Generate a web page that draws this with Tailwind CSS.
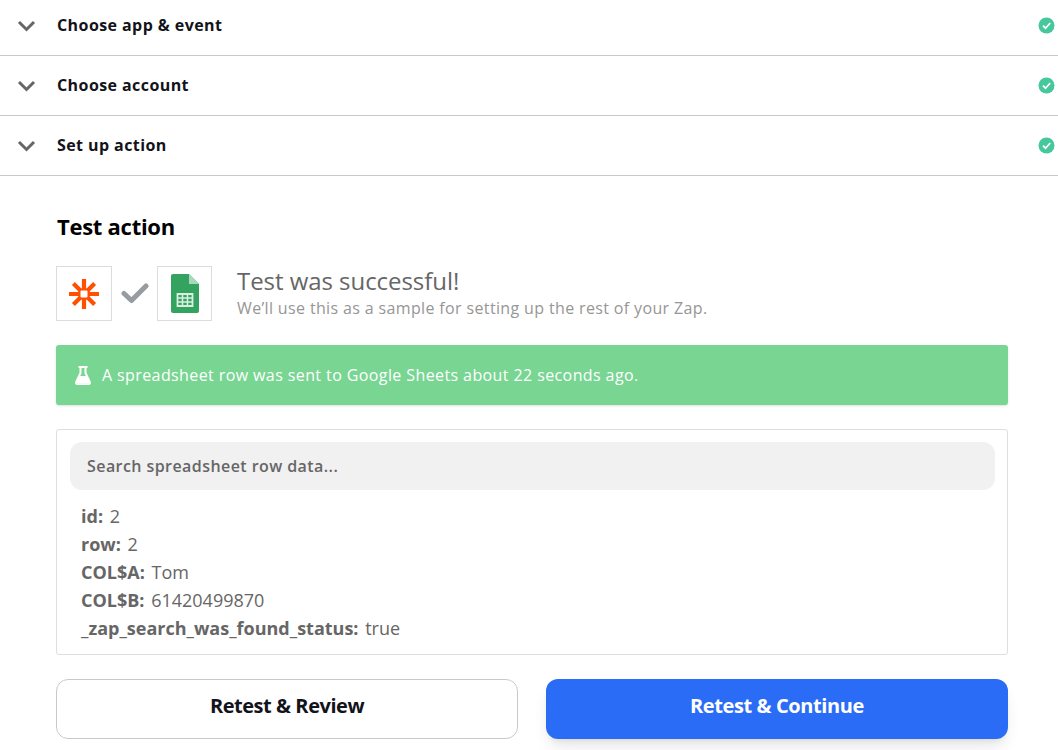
<!DOCTYPE html>
<html lang="en">
<head>
    <meta charset="UTF-8">
    <title>Test action</title>
    <script src="https://cdn.jsdelivr.net/npm/@tailwindcss/browser@4"></script>
</head>
<body class="bg-white w-[1058px] h-[750px] overflow-hidden font-['Open_Sans',sans-serif]">

    <div class="flex items-center h-[56px] border-b border-[#c9c9c9] pl-[17px] pr-[3px]">
        <svg class="w-[19px] h-[12px] mt-[-4px]" viewBox="0 0 19 12"><path d="M2 2l7.500 7.500L17 2" fill="none" stroke="#666" stroke-width="3"/></svg>
        <span class="ml-[21px] text-[16px] leading-[22px] font-bold text-[#13131a] tracking-[0.42px] mt-[-6px]">Choose app &amp; event</span>
        <svg class="ml-auto w-[17px] h-[17px] mt-[-4px]" viewBox="0 0 17 17"><circle cx="8.500" cy="8.500" r="8" fill="#46c79c"/><path d="M5 8.700l2.500 2.500L12.200 6" fill="none" stroke="#fff" stroke-width="1.700"/></svg>
    </div>
    <div class="flex items-center h-[60px] border-b border-[#c9c9c9] pl-[17px] pr-[3px]">
        <svg class="w-[19px] h-[12px]" viewBox="0 0 19 12"><path d="M2 2l7.500 7.500L17 2" fill="none" stroke="#666" stroke-width="3"/></svg>
        <span class="ml-[21px] text-[16px] leading-[22px] font-bold text-[#13131a] tracking-[0.42px] mt-[-2px]">Choose account</span>
        <svg class="ml-auto w-[17px] h-[17px]" viewBox="0 0 17 17"><circle cx="8.500" cy="8.500" r="8" fill="#46c79c"/><path d="M5 8.700l2.500 2.500L12.200 6" fill="none" stroke="#fff" stroke-width="1.700"/></svg>
    </div>
    <div class="flex items-center h-[60px] border-b border-[#c9c9c9] pl-[17px] pr-[3px]">
        <svg class="w-[19px] h-[12px]" viewBox="0 0 19 12"><path d="M2 2l7.500 7.500L17 2" fill="none" stroke="#666" stroke-width="3"/></svg>
        <span class="ml-[21px] text-[16px] leading-[22px] font-bold text-[#13131a] tracking-[0.42px] mt-[-2px]">Set up action</span>
        <svg class="ml-auto w-[17px] h-[17px]" viewBox="0 0 17 17"><circle cx="8.500" cy="8.500" r="8" fill="#46c79c"/><path d="M5 8.700l2.500 2.500L12.200 6" fill="none" stroke="#fff" stroke-width="1.700"/></svg>
    </div>

    <div class="pl-[56px] pr-[50px] pt-[34px]">
        <h2 class="text-[22px] leading-[32px] font-bold text-black pl-[1px] tracking-[-0.27px]">Test action</h2>

        <div class="flex items-center mt-[24px] h-[55px]">
            <div class="w-[56px] h-[55px] border border-[#dcdcdc] flex items-center justify-center">
                <svg class="w-[32px] h-[32px]" viewBox="0 0 32 32">
                    <g stroke="#ff4f00" stroke-width="4.200">
                        <path d="M16 1v10M16 21v10M1 16h10M21 16h10M5.400 5.400l7 7M19.600 19.600l7 7M26.600 5.400l-7 7M12.400 19.600l-7 7"/>
                    </g>
                    <rect x="10.500" y="10.500" width="11" height="11" fill="#ff4f00"/>
                    <rect x="12.500" y="12.500" width="7" height="7" rx="1" fill="#fff"/>
                </svg>
            </div>
            <svg class="w-[28px] h-[22px] ml-[9px] mt-[-2px]" viewBox="0 0 28 22"><path d="M3 11.500l7.500 7L25 4" fill="none" stroke="#969ca1" stroke-width="5" stroke-linecap="round" stroke-linejoin="round"/></svg>
            <div class="w-[55px] h-[55px] ml-[8px] border border-[#dcdcdc] flex items-center justify-center">
                <svg class="w-[28px] h-[39px] mt-[-1px]" viewBox="0 0 28 39">
                    <path d="M2 0h16l10 10v27a2 2 0 0 1-2 2H2a2 2 0 0 1-2-2V2a2 2 0 0 1 2-2z" fill="#34a35f"/>
                    <path d="M18 0l10 10H18z" fill="#a9d8bd"/>
                    <path d="M6.500 20h15v12h-15z" fill="none" stroke="#d8efe1" stroke-width="1.800"/>
                    <path d="M6.500 24h15M6.500 28h15M11.500 20v12M16.500 20v12" stroke="#d8efe1" stroke-width="1.600"/>
                </svg>
            </div>
            <div class="ml-[25px] mt-[-1px]">
                <p class="text-[24px] leading-[30px] text-[#666666] tracking-[-0.05px]">Test was successful!</p>
                <p class="mt-[1px] text-[16px] leading-[23px] text-[#969696] tracking-[0.36px]">We’ll use this as a sample for setting up the rest of your Zap.</p>
            </div>
        </div>

        <div class="flex items-center h-[60px] mt-[24px] bg-[#78d592] rounded-[3px] pl-[19px] text-white text-[16px] shadow-sm">
            <svg class="w-[16px] h-[19px]" viewBox="0 0 16 19"><path d="M3.500 1h9M5.500 1v6L1.200 16a1.500 1.500 0 0 0 1.400 2.200h10.800a1.500 1.500 0 0 0 1.400-2.200L10.500 7V1" fill="none" stroke="#fff" stroke-width="2"/><path d="M4.300 10h7.400l3.400 7.500H.900z" fill="#fff"/></svg>
            <span class="ml-[11px] tracking-[0.4px]">A spreadsheet row was sent to Google Sheets about 22 seconds ago.</span>
        </div>

        <div class="mt-[24px] h-[226px] border border-[#dedede] rounded-[3px] pt-[12px] pl-[13px] pr-[12px]">
            <div class="h-[48px] bg-[#f1f1f1] rounded-[12px] flex items-center pl-[17px] text-[16px] font-semibold text-[#666666] tracking-[0.43px]">Search spreadsheet row data...</div>
            <div class="mt-[12px] pl-[11px] text-[18px] leading-[28px] text-[#666666]">
                <p><b class="font-bold mr-[2px]">id:</b> 2</p>
                <p><b class="font-bold mr-[2px]">row:</b> 2</p>
                <p><b class="font-bold mr-[2px]">COL$A:</b> Tom</p>
                <p><b class="font-bold mr-[2px]">COL$B:</b> 61420499870</p>
                <p><b class="font-bold mr-[2px]">_zap_search_was_found_status:</b> true</p>
            </div>
        </div>

        <div class="flex gap-[28px] mt-[24px]">
            <button class="w-[462px] h-[60px] pb-[6px] border border-[#c9c9c9] rounded-[12px] bg-white text-[20px] font-bold tracking-[-0.45px] text-[#13131a]">Retest &amp; Review</button>
            <button class="w-[462px] h-[60px] pb-[6px] rounded-[12px] bg-[#2b6cf6] text-[20px] font-bold tracking-[-0.4px] text-white shadow-lg">Retest &amp; Continue</button>
        </div>
    </div>

</body>
</html>
